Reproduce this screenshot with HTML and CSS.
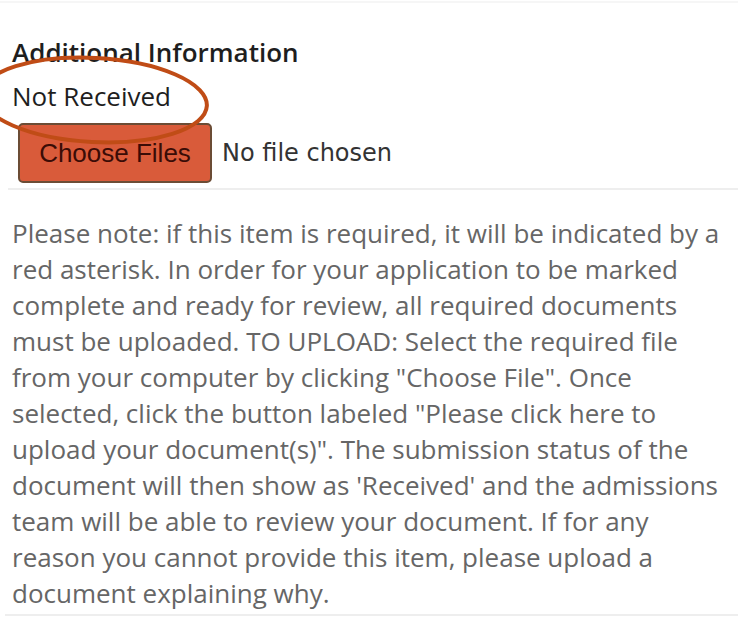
FILE: index.html
```html
<!DOCTYPE html>
<html lang="en">
<head>
  <meta charset="UTF-8">
  <title>Additional Information</title>
  <link rel="stylesheet" href="styles.css">
</head>
<body>
  <div class="doc-item">
    <div class="doc-head">
      <h3 class="doc-title">Additional Information</h3>
      <div class="doc-status">Not Received</div>
      <svg class="status-ring" width="240" height="110" viewBox="0 0 240 110">
        <ellipse cx="119" cy="55" rx="113" ry="42" fill="none" stroke="#c04c16" stroke-width="4" transform="rotate(3 119 55)"/>
      </svg>
    </div>
    <div class="upload-row">
      <button class="choose-btn">Choose Files</button>
      <span class="file-name">No file chosen</span>
    </div>
    <p class="doc-note">Please note: if this item is required, it will be indicated by a red asterisk. In order for your application to be marked complete and ready for review, all required documents must be uploaded. TO UPLOAD: Select the required file from your computer by clicking "Choose File". Once selected, click the button labeled "Please click here to upload your document(s)". The submission status of the document will then show as 'Received' and the admissions team will be able to review your document. If for any reason you cannot provide this item, please upload a document explaining why.</p>
  </div>
</body>
</html>
```

FILE: styles.css
```css
* {
  box-sizing: border-box;
  margin: 0;
  padding: 0;
}

body {
  background: #fff;
  font-family: "Open Sans", Arial, sans-serif;
  color: #222;
}

.doc-item {
  width: 738px;
  border-top: 2px solid #f6f6f6;
  margin-top: 1px;
}

/* Title and status */
.doc-head {
  position: relative;
  padding: 33px 0 0 12px;
}

.doc-title {
  font-size: 26px;
  font-weight: 600;
  line-height: 32px;
  color: #1e1e1e;
}

.doc-status {
  font-size: 26px;
  line-height: 32px;
  margin-top: 12px;
  color: #1e1e1e;
}

.status-ring {
  position: absolute;
  left: -25px;
  top: 42px;
}

/* File input */
.upload-row {
  display: flex;
  align-items: center;
  gap: 10px;
  margin: 11px 0 0 8px;
  padding: 0 0 5px 10px;
  border-bottom: 2px solid #eeeeee;
}

.choose-btn {
  width: 194px;
  height: 60px;
  background: #d95b3a;
  border: 2px solid #6b4c35;
  border-radius: 5px;
  font-family: "Liberation Sans", Arial, sans-serif;
  font-size: 26px;
  color: #3a0c06;
}

.file-name {
  font-family: "DejaVu Sans", sans-serif;
  font-size: 24px;
  color: #333;
}

/* Instructions */
.doc-note {
  margin: 0 0 0 5px;
  padding: 25px 6px 3px 7px;
  font-size: 26px;
  line-height: 36px;
  color: #666;
  border-bottom: 2px solid #eeeeee;
}
```
